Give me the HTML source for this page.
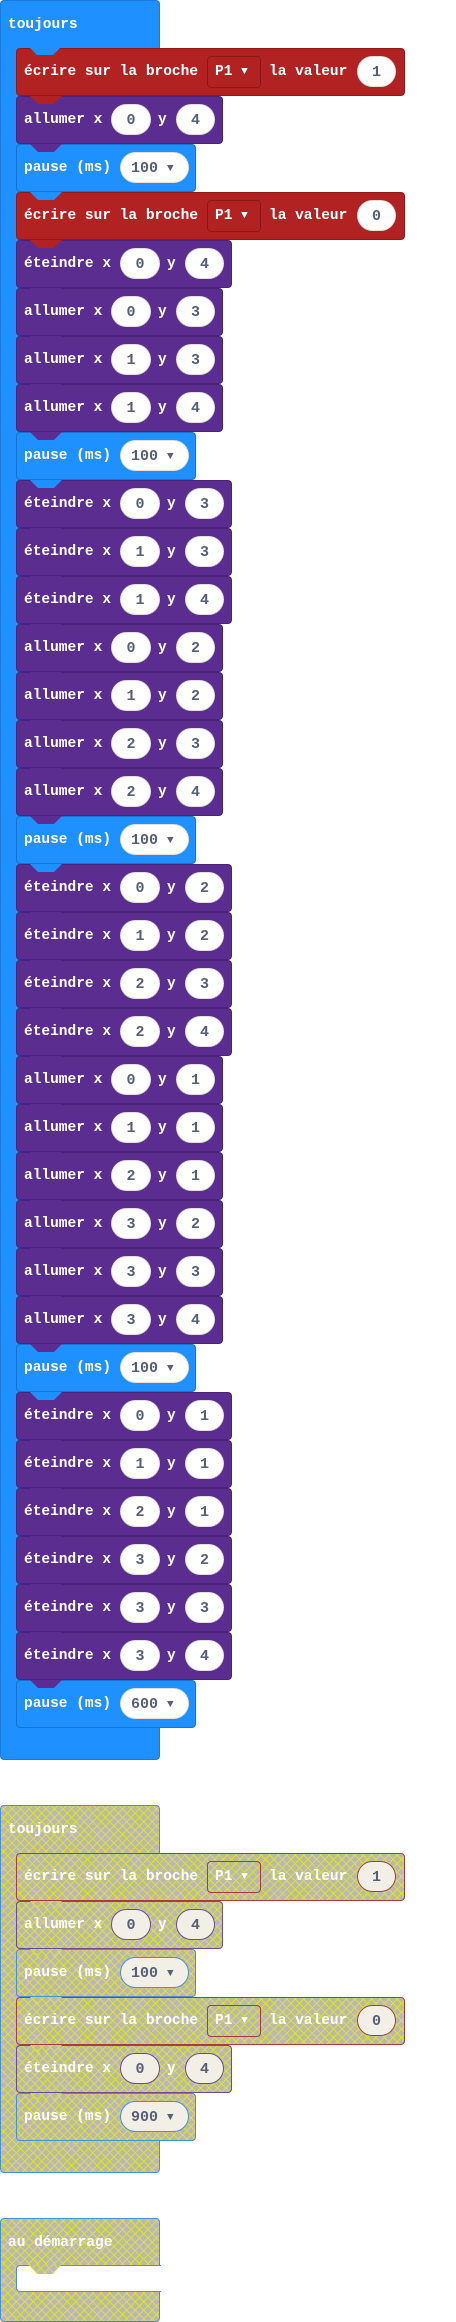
<!DOCTYPE html>
<html><head><meta charset="utf-8"><style>
body{margin:0;width:456px;height:2322px;background:#fff;position:relative;overflow:hidden;font:bold 14.5px "Liberation Mono","DejaVu Sans Mono",monospace}
.c{position:absolute;left:0;width:160px;border-radius:4px;box-sizing:border-box;border:1px solid rgba(0,0,0,.15);background:#1e90ff}
.c .t{position:absolute;left:7px;top:0;line-height:48px;color:#fff}
.b{position:absolute;left:16px;height:48px;border-radius:4px;box-sizing:border-box;border:1px solid rgba(0,0,0,.2);color:#fff;line-height:46px;white-space:pre}
.b::after,.tab{content:"";position:absolute;left:13px;top:47px;width:32px;height:8px;background:inherit;clip-path:polygon(0 0,100% 0,75% 100%,25% 100%);z-index:2}
.t{position:absolute;left:7px;top:0}
.p{position:absolute;top:7px;height:31px;border-radius:16px;background:#fff;color:#575e75;text-align:center;line-height:31px;box-sizing:border-box;border:1px solid rgba(0,0,0,.12);font-size:15px}
.d{position:absolute;left:190px;top:7px;width:54px;height:32px;box-sizing:border-box;border:1px solid rgba(0,0,0,.25);border-radius:4px;line-height:30px;padding-left:7px}
.E{width:389px;background:#b22222}
.A{width:207px;background:#5c2d91}
.T{width:216px;background:#5c2d91}
.P{width:180px;background:#1e90ff}
.E .l2{position:absolute;left:252px;top:0}
.E .p{left:340px;width:39px}
.A .y{position:absolute;left:141px;top:0}
.A .p1{left:94px;width:40px}.A .p2{left:159px;width:39px}
.T .y{position:absolute;left:150px;top:0}
.T .p1{left:103px;width:40px}.T .p2{left:168px;width:39px}
.P .p{left:103px;width:69px;text-align:left;padding-left:10px}
.ar{font-size:11px;position:relative;top:-1px}
.h{background-color:#b9b9ad!important;background-image:repeating-linear-gradient(45deg,rgba(228,228,50,.85) 0 1px,transparent 1px 6px),repeating-linear-gradient(-45deg,rgba(228,228,50,.85) 0 1px,transparent 1px 6px)!important}
.h .p{background:#f2f0e6}
.hb{border-color:#4a8fd0!important}.hr{border-color:#a04040!important}.hp{border-color:#6a4a9a!important}
.hr .p,.hr .d{border-color:#a04040}.hp .p{border-color:#6a4a9a}.hb .p{border-color:#4a8fd0}
</style></head><body>

<div class="c" style="top:0;height:1760px"><span class="t">toujours</span></div>
<div class="tab" style="left:29px;top:47px;background:#1e90ff"></div>

<div class="b E" style="top:48px"><span class="t">écrire sur la broche</span><span class="d">P1 <span class="ar">▼</span></span><span class="l2">la valeur</span><span class="p">1</span></div>
<div class="b A" style="top:96px"><span class="t">allumer x</span><span class="p p1">0</span><span class="y">y</span><span class="p p2">4</span></div>
<div class="b P" style="top:144px"><span class="t">pause (ms)</span><span class="p">100 <span class="ar">▼</span></span></div>
<div class="b E" style="top:192px"><span class="t">écrire sur la broche</span><span class="d">P1 <span class="ar">▼</span></span><span class="l2">la valeur</span><span class="p">0</span></div>
<div class="b T" style="top:240px"><span class="t">éteindre x</span><span class="p p1">0</span><span class="y">y</span><span class="p p2">4</span></div>
<div class="b A" style="top:288px"><span class="t">allumer x</span><span class="p p1">0</span><span class="y">y</span><span class="p p2">3</span></div>
<div class="b A" style="top:336px"><span class="t">allumer x</span><span class="p p1">1</span><span class="y">y</span><span class="p p2">3</span></div>
<div class="b A" style="top:384px"><span class="t">allumer x</span><span class="p p1">1</span><span class="y">y</span><span class="p p2">4</span></div>
<div class="b P" style="top:432px"><span class="t">pause (ms)</span><span class="p">100 <span class="ar">▼</span></span></div>
<div class="b T" style="top:480px"><span class="t">éteindre x</span><span class="p p1">0</span><span class="y">y</span><span class="p p2">3</span></div>
<div class="b T" style="top:528px"><span class="t">éteindre x</span><span class="p p1">1</span><span class="y">y</span><span class="p p2">3</span></div>
<div class="b T" style="top:576px"><span class="t">éteindre x</span><span class="p p1">1</span><span class="y">y</span><span class="p p2">4</span></div>
<div class="b A" style="top:624px"><span class="t">allumer x</span><span class="p p1">0</span><span class="y">y</span><span class="p p2">2</span></div>
<div class="b A" style="top:672px"><span class="t">allumer x</span><span class="p p1">1</span><span class="y">y</span><span class="p p2">2</span></div>
<div class="b A" style="top:720px"><span class="t">allumer x</span><span class="p p1">2</span><span class="y">y</span><span class="p p2">3</span></div>
<div class="b A" style="top:768px"><span class="t">allumer x</span><span class="p p1">2</span><span class="y">y</span><span class="p p2">4</span></div>
<div class="b P" style="top:816px"><span class="t">pause (ms)</span><span class="p">100 <span class="ar">▼</span></span></div>
<div class="b T" style="top:864px"><span class="t">éteindre x</span><span class="p p1">0</span><span class="y">y</span><span class="p p2">2</span></div>
<div class="b T" style="top:912px"><span class="t">éteindre x</span><span class="p p1">1</span><span class="y">y</span><span class="p p2">2</span></div>
<div class="b T" style="top:960px"><span class="t">éteindre x</span><span class="p p1">2</span><span class="y">y</span><span class="p p2">3</span></div>
<div class="b T" style="top:1008px"><span class="t">éteindre x</span><span class="p p1">2</span><span class="y">y</span><span class="p p2">4</span></div>
<div class="b A" style="top:1056px"><span class="t">allumer x</span><span class="p p1">0</span><span class="y">y</span><span class="p p2">1</span></div>
<div class="b A" style="top:1104px"><span class="t">allumer x</span><span class="p p1">1</span><span class="y">y</span><span class="p p2">1</span></div>
<div class="b A" style="top:1152px"><span class="t">allumer x</span><span class="p p1">2</span><span class="y">y</span><span class="p p2">1</span></div>
<div class="b A" style="top:1200px"><span class="t">allumer x</span><span class="p p1">3</span><span class="y">y</span><span class="p p2">2</span></div>
<div class="b A" style="top:1248px"><span class="t">allumer x</span><span class="p p1">3</span><span class="y">y</span><span class="p p2">3</span></div>
<div class="b A" style="top:1296px"><span class="t">allumer x</span><span class="p p1">3</span><span class="y">y</span><span class="p p2">4</span></div>
<div class="b P" style="top:1344px"><span class="t">pause (ms)</span><span class="p">100 <span class="ar">▼</span></span></div>
<div class="b T" style="top:1392px"><span class="t">éteindre x</span><span class="p p1">0</span><span class="y">y</span><span class="p p2">1</span></div>
<div class="b T" style="top:1440px"><span class="t">éteindre x</span><span class="p p1">1</span><span class="y">y</span><span class="p p2">1</span></div>
<div class="b T" style="top:1488px"><span class="t">éteindre x</span><span class="p p1">2</span><span class="y">y</span><span class="p p2">1</span></div>
<div class="b T" style="top:1536px"><span class="t">éteindre x</span><span class="p p1">3</span><span class="y">y</span><span class="p p2">2</span></div>
<div class="b T" style="top:1584px"><span class="t">éteindre x</span><span class="p p1">3</span><span class="y">y</span><span class="p p2">3</span></div>
<div class="b T" style="top:1632px"><span class="t">éteindre x</span><span class="p p1">3</span><span class="y">y</span><span class="p p2">4</span></div>
<div class="b P" style="top:1680px"><span class="t">pause (ms)</span><span class="p">600 <span class="ar">▼</span></span></div>

<div class="c h hb" style="top:1805px;height:368px"><span class="t">toujours</span></div>

<div class="b E h hr" style="top:1853px"><span class="t">écrire sur la broche</span><span class="d">P1 <span class="ar">▼</span></span><span class="l2">la valeur</span><span class="p">1</span></div>
<div class="b A h hp" style="top:1901px"><span class="t">allumer x</span><span class="p p1">0</span><span class="y">y</span><span class="p p2">4</span></div>
<div class="b P h hb" style="top:1949px"><span class="t">pause (ms)</span><span class="p">100 <span class="ar">▼</span></span></div>
<div class="b E h hr" style="top:1997px"><span class="t">écrire sur la broche</span><span class="d">P1 <span class="ar">▼</span></span><span class="l2">la valeur</span><span class="p">0</span></div>
<div class="b T h hp" style="top:2045px"><span class="t">éteindre x</span><span class="p p1">0</span><span class="y">y</span><span class="p p2">4</span></div>
<div class="b P h hb" style="top:2093px"><span class="t">pause (ms)</span><span class="p">900 <span class="ar">▼</span></span></div>

<div class="c h hb" style="top:2218px;height:104px"><span class="t">au démarrage</span></div>
<div style="position:absolute;left:16px;top:2265px;width:144px;height:25px;background:#fff;border:1px solid #4a8fd0;border-right:none;border-radius:4px 0 0 4px"></div>
<div class="tab h" style="left:29px;top:2265px;height:9px"></div>

</body></html>
